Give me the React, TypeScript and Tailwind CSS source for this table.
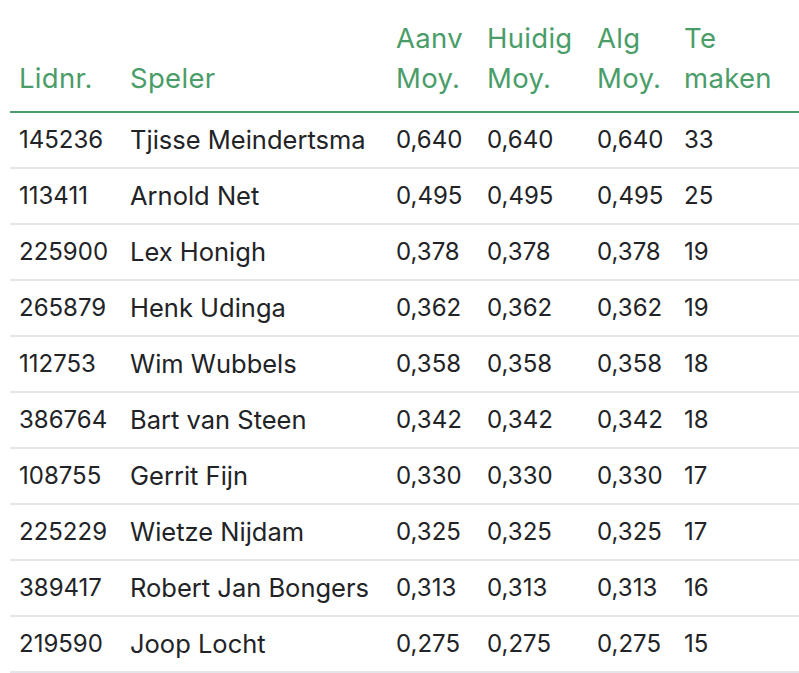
const rows: [string, string, string, string, string, string][] = [
  ['145236', 'Tjisse Meindertsma', '0,640', '0,640', '0,640', '33'],
  ['113411', 'Arnold Net', '0,495', '0,495', '0,495', '25'],
  ['225900', 'Lex Honigh', '0,378', '0,378', '0,378', '19'],
  ['265879', 'Henk Udinga', '0,362', '0,362', '0,362', '19'],
  ['112753', 'Wim Wubbels', '0,358', '0,358', '0,358', '18'],
  ['386764', 'Bart van Steen', '0,342', '0,342', '0,342', '18'],
  ['108755', 'Gerrit Fijn', '0,330', '0,330', '0,330', '17'],
  ['225229', 'Wietze Nijdam', '0,325', '0,325', '0,325', '17'],
  ['389417', 'Robert Jan Bongers', '0,313', '0,313', '0,313', '16'],
  ['219590', 'Joop Locht', '0,275', '0,275', '0,275', '15'],
]

const headers = [
  ['Lidnr.'],
  ['Speler'],
  ['Aanv', 'Moy.'],
  ['Huidig', 'Moy.'],
  ['Alg', 'Moy.'],
  ['Te', 'maken'],
]

const widths = ['w-[111px]', 'w-[266px]', 'w-[91px]', 'w-[110px]', 'w-[87px]', 'w-[124px]']

export default function App() {
  return (
    <main className="min-h-screen bg-white pl-[10px]" style={{ fontFamily: 'Inter, "Open Sans", sans-serif' }}>
      <table className="table-fixed w-[789px] border-collapse">
        <thead>
          <tr className="border-b-2 border-[#4a9d68]">
            {headers.map((h, i) => (
              <th
                key={i}
                className={`${widths[i]} text-left align-bottom font-normal text-[#4a9d68] text-[27.5px] tracking-[0.3px] leading-[40px] pl-[9px] pt-[18px] pb-[13px] whitespace-nowrap`}
              >
                {h.map((line, j) => (
                  <div key={j}>{line}</div>
                ))}
              </th>
            ))}
          </tr>
        </thead>
        <tbody>
          {rows.map((r, i) => (
            <tr key={i} className="border-b-2 border-[#e4e5ea] h-[56px]">
              {r.map((c, j) => (
                <td
                  key={j}
                  className={`pl-[9px] ${j === 1 ? 'text-[25.5px]' : 'text-[24px]'} leading-[54px] text-[#222326] whitespace-nowrap`}
                >
                  {c}
                </td>
              ))}
            </tr>
          ))}
        </tbody>
      </table>
    </main>
  )
}
